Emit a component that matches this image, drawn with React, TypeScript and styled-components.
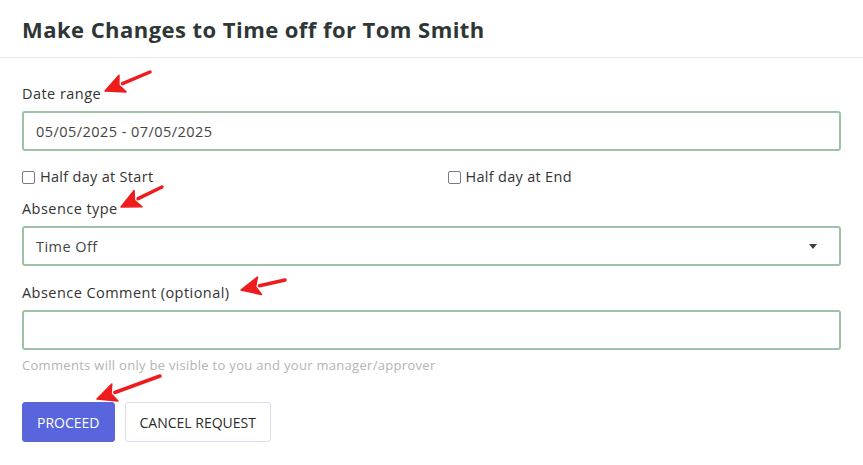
import React, { useState } from "react";
import styled, { createGlobalStyle } from "styled-components";

const GlobalStyle = createGlobalStyle`
  body {
    margin: 0;
    background: #ffffff;
    font-family: "Open Sans", "Noto Sans", sans-serif;
    color: #333333;
  }
`;

const Page = styled.div`
  position: relative;
  width: 863px;
  height: 465px;
  overflow: hidden;
  background: #ffffff;
`;

const Header = styled.div`
  height: 57px;
  padding: 0 22px;
  display: flex;
  align-items: center;
  border-bottom: 1px solid #ebebeb;
`;

const Title = styled.h2`
  margin: 0;
  font-size: 22px;
  font-weight: 700;
  color: #2e3636;
  letter-spacing: 0.45px;
`;

const Form = styled.form`
  padding: 26px 22px 0;
  display: flex;
  flex-direction: column;
`;

const Field = styled.div<{ gap?: number }>`
  display: flex;
  flex-direction: column;
  margin-top: ${(p) => p.gap ?? 0}px;
`;

const Label = styled.label`
  font-size: 14.5px;
  line-height: 20px;
  letter-spacing: 0.45px;
  color: #333333;
  margin-bottom: 7px;
`;

const TextInput = styled.input`
  box-sizing: border-box;
  width: 100%;
  height: 40px;
  padding: 0 12px;
  border: 2px solid #9dc2a5;
  border-radius: 3px;
  font-family: inherit;
  font-size: 14.5px;
  letter-spacing: 0.45px;
  color: #444444;
  outline: none;
`;

const SelectBox = styled.div`
  box-sizing: border-box;
  width: 100%;
  height: 40px;
  padding: 0 22px 0 12px;
  border: 2px solid #9dc2a5;
  border-radius: 3px;
  display: flex;
  align-items: center;
  justify-content: space-between;
  font-size: 14.5px;
  letter-spacing: 0.45px;
  color: #444444;
`;

const Caret = styled.span`
  width: 0;
  height: 0;
  border-left: 4px solid transparent;
  border-right: 4px solid transparent;
  border-top: 5px solid #3d3d3d;
`;

const CheckRow = styled.div`
  display: grid;
  grid-template-columns: 1fr 1fr;
  column-gap: 32px;
  margin-top: 16px;
`;

const CheckLabel = styled.label`
  display: flex;
  align-items: center;
  gap: 5px;
  font-size: 14.5px;
  line-height: 20px;
  letter-spacing: 0.3px;
  color: #333333;
`;

const Box = styled.span<{ checked: boolean }>`
  box-sizing: border-box;
  width: 13px;
  height: 13px;
  border: 1px solid #7b7689;
  border-radius: 2px;
  background: ${(p) => (p.checked ? "#5865dc" : "#ffffff")};
`;

const Help = styled.div`
  margin-top: 7px;
  font-size: 13px;
  line-height: 16px;
  letter-spacing: 0.3px;
  color: #b4b4b4;
`;

const Actions = styled.div`
  display: flex;
  gap: 10px;
  margin-top: 29px;
`;

const Button = styled.button<{ primary?: boolean }>`
  height: 40px;
  padding: 0 14px;
  border-radius: 3px;
  font-family: inherit;
  font-size: 14px;
  text-transform: uppercase;
  cursor: pointer;
  border: 1px solid ${(p) => (p.primary ? "#5865dc" : "#dcdcee")};
  background: ${(p) => (p.primary ? "#5865dc" : "#ffffff")};
  color: ${(p) => (p.primary ? "#ffffff" : "#2b2b2b")};
`;

const Arrow = styled.svg`
  position: absolute;
  overflow: visible;
  pointer-events: none;
`;

const arrows = [
  { x1: 150, y1: 72, x2: 105, y2: 91 },
  { x1: 162, y1: 187, x2: 121, y2: 207 },
  { x1: 285, y1: 280, x2: 241, y2: 290 },
  { x1: 160, y1: 376, x2: 97, y2: 399 },
];

const RedArrow: React.FC<{ x1: number; y1: number; x2: number; y2: number }> = ({ x1, y1, x2, y2 }) => {
  const ang = Math.atan2(y2 - y1, x2 - x1);
  const len = 19;
  const w = 9;
  const bx = x2 - Math.cos(ang) * len;
  const by = y2 - Math.sin(ang) * len;
  const px = -Math.sin(ang) * w;
  const py = Math.cos(ang) * w;
  return (
    <Arrow width="863" height="465" style={{ left: 0, top: 0 }}>
      <line x1={x1} y1={y1} x2={bx} y2={by} stroke="#ee1c1c" strokeWidth="3.5" strokeLinecap="round" />
      <polygon
        points={`${x2},${y2} ${bx + px},${by + py} ${bx + Math.cos(ang) * 4},${by + Math.sin(ang) * 4} ${bx - px},${by - py}`}
        fill="#ee1c1c"
        stroke="#ee1c1c"
        strokeWidth="1.5"
        strokeLinejoin="round"
      />
    </Arrow>
  );
};

export default function App() {
  const [startHalf, setStartHalf] = useState(false);
  const [endHalf, setEndHalf] = useState(false);

  return (
    <Page>
      <GlobalStyle />
      <Header>
        <Title>Make Changes to Time off for Tom Smith</Title>
      </Header>
      <Form onSubmit={(e) => e.preventDefault()}>
        <Field>
          <Label>Date range</Label>
          <TextInput defaultValue="05/05/2025 - 07/05/2025" />
        </Field>
        <CheckRow>
          <CheckLabel onClick={() => setStartHalf(!startHalf)}>
            <Box checked={startHalf} />
            Half day at Start
          </CheckLabel>
          <CheckLabel onClick={() => setEndHalf(!endHalf)}>
            <Box checked={endHalf} />
            Half day at End
          </CheckLabel>
        </CheckRow>
        <Field gap={12}>
          <Label>Absence type</Label>
          <SelectBox>
            Time Off
            <Caret />
          </SelectBox>
        </Field>
        <Field gap={17}>
          <Label>Absence Comment (optional)</Label>
          <TextInput />
          <Help>Comments will only be visible to you and your manager/approver</Help>
        </Field>
        <Actions>
          <Button primary type="submit">Proceed</Button>
          <Button type="button">Cancel Request</Button>
        </Actions>
      </Form>
      {arrows.map((a, i) => (
        <RedArrow key={i} {...a} />
      ))}
    </Page>
  );
}
